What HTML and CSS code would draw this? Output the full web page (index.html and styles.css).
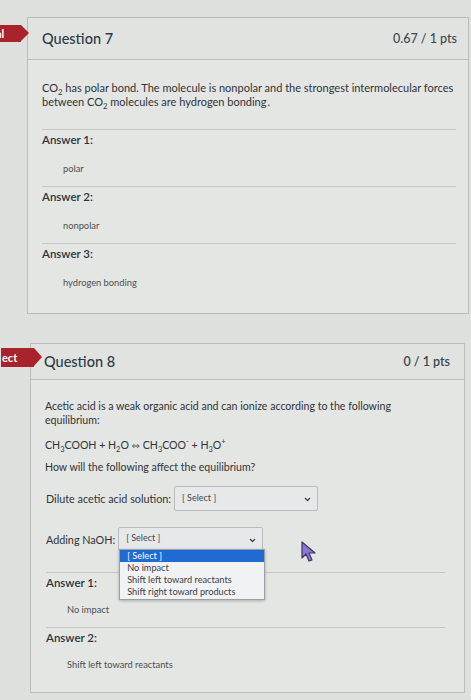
FILE: index.html
```html
<!DOCTYPE html>
<html>
<head>
<meta charset="utf-8">
<link rel="stylesheet" href="styles.css">
</head>
<body>
<div class="page">
  <section class="card card-q7">
    <div class="flag flag-q7"><span>al</span></div>
    <header class="card-head">
      <h2 class="q-title">Question 7</h2>
      <span class="pts">0.67 / 1 pts</span>
    </header>
    <div class="card-body">
      <p class="q-text">CO<sub>2</sub> has polar bond. The molecule is nonpolar and the strongest intermolecular forces between CO<sub>2</sub> molecules are hydrogen bonding<span class="dot">.</span></p>
      <div class="answers">
        <div class="ans">
          <div class="ans-label">Answer 1:</div>
          <div class="ans-value">polar</div>
        </div>
        <div class="ans">
          <div class="ans-label">Answer 2:</div>
          <div class="ans-value">nonpolar</div>
        </div>
        <div class="ans ans-last">
          <div class="ans-label">Answer 3:</div>
          <div class="ans-value">hydrogen bonding</div>
        </div>
      </div>
    </div>
  </section>

  <section class="card card-q8">
    <div class="flag flag-q8"><span>ect</span></div>
    <header class="card-head">
      <h2 class="q-title">Question 8</h2>
      <span class="pts">0 / 1 pts</span>
    </header>
    <div class="card-body">
      <p class="q-text">Acetic acid is a weak organic acid and can ionize according to the following equilibrium:</p>
      <p class="q-eq">CH<sub>3</sub>COOH + H<sub>2</sub>O <span class="arrow">&#8660;</span> CH<sub>3</sub>COO<sup>-</sup> + H<sub>3</sub>O<sup>+</sup></p>
      <p class="q-ask">How will the following affect the equilibrium?</p>
      <div class="sel-row sel-row-1">
        <span class="sel-label">Dilute acetic acid solution:</span>
        <div class="sel sel-dilute">
          <span class="sel-text">[ Select ]</span>
          <svg class="chev" width="7" height="5" viewBox="0 0 7 5"><path d="M1 1 L3.5 3.5 L6 1" fill="none" stroke="#444" stroke-width="1.3"/></svg>
        </div>
      </div>
      <div class="sel-row sel-row-2">
        <span class="sel-label">Adding NaOH:</span>
        <div class="sel sel-naoh">
          <span class="sel-text">[ Select ]</span>
          <svg class="chev" width="7" height="5" viewBox="0 0 7 5"><path d="M1 1 L3.5 3.5 L6 1" fill="none" stroke="#444" stroke-width="1.3"/></svg>
          <ul class="menu">
            <li class="opt opt-active">[ Select ]</li>
            <li class="opt">No impact</li>
            <li class="opt">Shift left toward reactants</li>
            <li class="opt">Shift right toward products</li>
          </ul>
        </div>
        <svg class="cursor" width="18" height="22" viewBox="0 0 18 22"><path d="M2 1 L2 17 L6 13 L9 20 L12 19 L9 12 L15 12 Z" fill="#8d78cf" stroke="#3f3566" stroke-width="1.2" stroke-linejoin="round"/></svg>
      </div>
      <div class="answers answers-q8">
        <div class="ans">
          <div class="ans-label">Answer 1:</div>
          <div class="ans-value">No impact</div>
        </div>
        <div class="ans ans-last">
          <div class="ans-label">Answer 2:</div>
          <div class="ans-value">Shift left toward reactants</div>
        </div>
      </div>
    </div>
  </section>
</div>
</body>
</html>
```

FILE: styles.css
```css
html, body {
  margin: 0;
  padding: 0;
}
body {
  background: #dee0de;
  font-family: Lato, "Open Sans", sans-serif;
  color: #2d3b45;
  width: 471px;
  height: 700px;
  overflow: hidden;
}
.page {
  display: flex;
  flex-direction: column;
  padding-top: 17px;
}
.card {
  position: relative;
  border: 1px solid #b9bcba;
  background: #e4e6e4;
}
.card-q7 {
  margin-left: 27px;
  width: 440px;
}
.card-q8 {
  margin-left: 30px;
  margin-top: 29px;
  width: 433px;
}
.flag {
  position: absolute;
  left: -31px;
  height: 17px;
  background: #a9232c;
  color: #fff;
  font-size: 11px;
  font-weight: 700;
  line-height: 17px;
  display: flex;
  align-items: center;
}
.flag::after {
  content: "";
  position: absolute;
  right: -8px;
  top: 0;
  border-left: 8px solid #a9232c;
  border-top: 8.5px solid transparent;
  border-bottom: 8.5px solid transparent;
}
.flag-q7 {
  top: 7px;
  width: 24px;
}
.flag-q7 span {
  margin-left: -1px;
}
.flag-q8 {
  top: 4px;
  left: -30px;
  width: 33px;
  height: 19px;
  line-height: 19px;
}
.flag-q8::after {
  border-top-width: 9.5px;
  border-bottom-width: 9.5px;
}
.flag-q8 span {
  margin-left: 1px;
}
.card-head {
  display: flex;
  justify-content: space-between;
  align-items: center;
  background: #e1e3e1;
  border-bottom: 1px solid #babdbb;
  height: 41px;
  padding: 0 11px 0 14px;
}
.card-q8 .card-head {
  height: 35px;
  padding: 0 14px 0 13px;
}
.q-title {
  margin: 0;
  font-size: 14.5px;
  font-weight: 500;
  color: #2d3b45;
}
.pts {
  font-size: 12.5px;
  font-weight: 600;
  color: #3d4850;
}
.card-q7 .pts {
  font-weight: 500;
}
.card-body {
  padding: 21px 12px 13px 14px;
}
.card-q8 .card-body {
  padding: 19px 19px 10px 14px;
}
.q-text, .q-eq, .q-ask {
  margin: 0;
  font-size: 11px;
  line-height: 14px;
  color: #2f3338;
}
.card-q8 .q-text, .card-q8 .q-eq, .card-q8 .q-ask {
  font-size: 10.6px;
  padding-right: 40px;
}
.q-eq {
  margin-top: 11px !important;
}
.q-ask {
  margin-top: 7px !important;
}
.arrow {
  font-family: "DejaVu Sans", sans-serif;
  font-size: 10px;
  color: #555;
}
sub, sup {
  font-size: 0.7em;
  line-height: 0;
}
.dot {
  padding-left: 1px;
}
.answers {
  margin-top: 20px;
}
.ans {
  border-top: 1px solid #c4c7c5;
  padding: 3px 0 10px 0;
}
.ans-last {
  padding-bottom: 10px;
}
.ans-label {
  font-size: 11.5px;
  font-weight: 600;
  line-height: 14px;
  color: #2d3338;
}
.ans-value {
  margin-top: 15px;
  margin-left: 21px;
  font-size: 9.3px;
  line-height: 14px;
  color: #4a4f52;
}
.sel-row {
  display: flex;
  align-items: center;
  position: relative;
  font-size: 10.8px;
  color: #2f3338;
}
.sel-row-1 {
  margin-top: 12px;
  padding-left: 1px;
}
.sel-row-2 {
  margin-top: 16px;
  padding-left: 1px;
  z-index: 2;
}
.sel-label {
  margin-right: 3px;
}
.sel {
  position: relative;
  display: flex;
  align-items: center;
  justify-content: space-between;
  border: 1px solid #b8bbc0;
  border-radius: 2px;
  background: #e6e8ea;
  box-sizing: border-box;
  padding: 0 6px 0 7px;
}
.sel-dilute {
  width: 144px;
  height: 25px;
}
.sel-naoh {
  width: 145px;
  height: 24px;
}
.sel-text {
  font-size: 9px;
  color: #444a50;
  margin-top: -3px;
}
.chev {
  margin-top: 2px;
}
.menu {
  position: absolute;
  left: 0;
  top: 21px;
  width: 144px;
  margin: 0;
  padding: 0 0 1px 0;
  list-style: none;
  background: #f1f2f4;
  border: 1px solid #9a9da2;
  box-shadow: 0 1px 3px rgba(0, 0, 0, 0.25);
}
.opt {
  font-size: 9.2px;
  line-height: 12px;
  padding-left: 7px;
  color: #3b4046;
}
.opt-active {
  background: #1f6bd2;
  color: #ffffff;
}
.cursor {
  position: absolute;
  left: 255px;
  top: 14px;
}
.answers-q8 {
  margin-top: 21px;
  padding-left: 1px;
}
.answers-q8 .ans {
  padding: 3px 0 10px 0;
}
.answers-q8 .ans-value {
  margin-top: 13px;
}
.answers-q8 .ans-last {
  padding-bottom: 10px;
}
```
